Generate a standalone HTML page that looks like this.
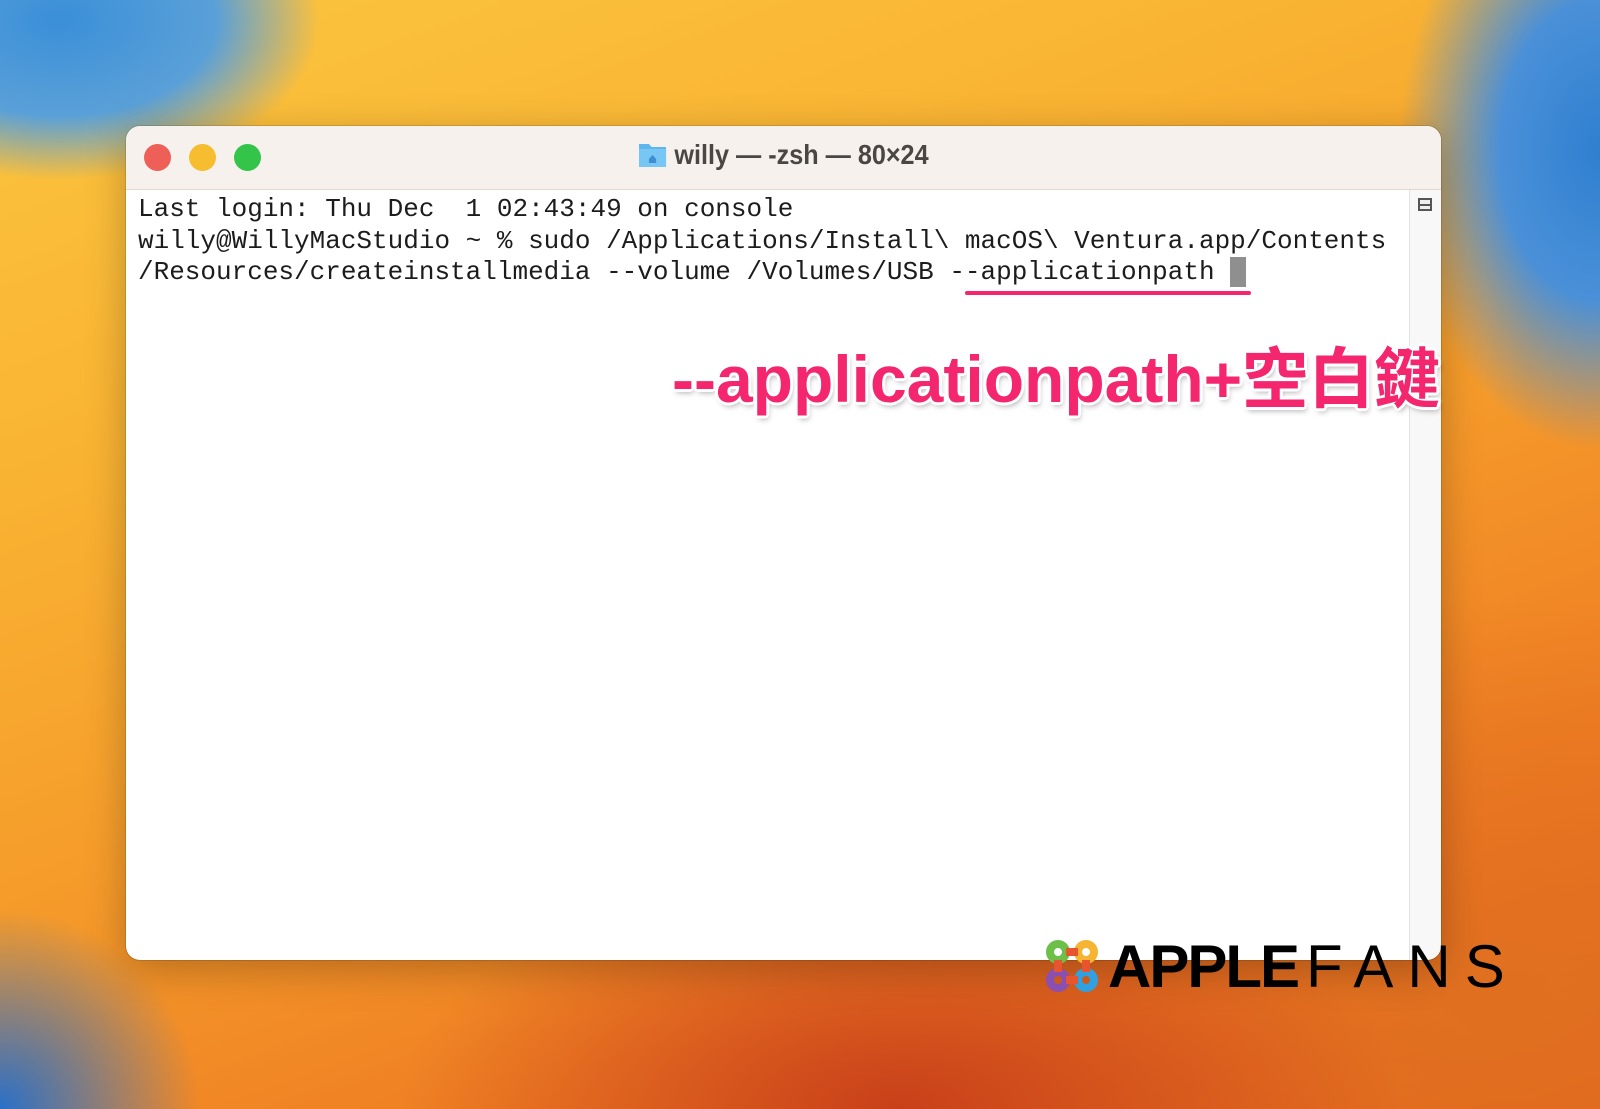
<!DOCTYPE html>
<html><head><meta charset="utf-8"><style>
html,body{margin:0;padding:0}
body{width:1600px;height:1109px;position:relative;overflow:hidden;
background:
radial-gradient(ellipse 260px 160px at 60px 20px,#3a8fd8 0%,#5aa0d8 60%,rgba(90,160,216,0) 100%),
radial-gradient(ellipse 200px 300px at 1600px 150px,#2f7fd0 0%,#4a90d8 50%,rgba(74,144,216,0) 100%),
radial-gradient(ellipse 200px 200px at 0px 1109px,#2a70c8 0%,rgba(42,112,200,0) 100%),
radial-gradient(ellipse 500px 250px at 900px 1109px,#c8401a 0%,rgba(200,64,26,0) 100%),
radial-gradient(ellipse 600px 400px at 1500px 1000px,#e07020 0%,rgba(224,112,32,0) 100%),
linear-gradient(160deg,#fbc640 0%,#f9b232 30%,#f59a2a 55%,#ee7a22 80%,#e2601c 100%);}
.win{position:absolute;left:126px;top:126px;width:1315px;height:834px;border-radius:14px;background:#fff;overflow:hidden;box-shadow:0 10px 40px rgba(0,0,0,.25),0 0 0 1px rgba(0,0,0,.12)}
.tb{height:63px;background:#f6f1ec;border-bottom:1px solid #ddd8d3;position:relative}
.dot{position:absolute;top:18px;width:27px;height:27px;border-radius:50%}
.title{position:absolute;left:0;right:0;top:13px;text-align:center;font:bold 28px "Liberation Sans",sans-serif;color:#4a4644;transform:scaleX(.9)}
.term{position:absolute;left:12px;top:68px;font:26px/31.5px "Liberation Mono",monospace;color:#1c1c1c;white-space:pre}
.sb{position:absolute;right:0;top:64px;width:31px;bottom:0;background:#f8f8f8;border-left:1px solid #e2e2e2}
.ann{position:absolute;left:672px;top:326px;font:bold 66px "Liberation Sans","Noto Sans CJK TC",sans-serif;color:#f4276e;letter-spacing:0px;white-space:nowrap;
text-shadow:3px 0 #fff,-3px 0 #fff,0 3px #fff,0 -3px #fff,2px 2px #fff,-2px 2px #fff,2px -2px #fff,-2px -2px #fff,2px 4px 6px rgba(0,0,0,.3)}
.logo{position:absolute;left:1108px;top:932px;font:900 60px "Liberation Sans",sans-serif;color:#000;white-space:nowrap;letter-spacing:-2px}
.logo span{font-weight:300;letter-spacing:14px;margin-left:8px}
</style></head><body>
<div class="win">
<div class="tb">
<div class="dot" style="left:18px;background:#ed5f57"></div>
<div class="dot" style="left:63px;background:#f5bd2f"></div>
<div class="dot" style="left:108px;background:#34c449"></div>
<div class="title"><svg width="32" height="28" viewBox="0 0 32 28" style="vertical-align:-4px;margin-right:8px"><path d="M1 4h11l3 3h16v20H1z" fill="#5eb6ee"/><path d="M1 9h30v18H1z" fill="#78c6f4"/><path d="M12 19l4-4 4 4v4h-8z" fill="#3f8fd0"/></svg>willy — -zsh — 80×24</div>
</div>
<div class="term">Last login: Thu Dec  1 02:43:49 on console
willy@WillyMacStudio ~ % sudo /Applications/Install\ macOS\ Ventura.app/Contents
/Resources/createinstallmedia --volume /Volumes/USB --applicationpath <span style="background:#8f8f8f;color:#8f8f8f"> </span></div>
<div style="position:absolute;left:839px;top:165px;width:286px;height:4px;border-radius:2px;background:#f4276e"></div>
<div class="sb"><div style="position:absolute;left:8px;top:8px;width:14px;height:13px;border:2px solid #555;box-sizing:border-box;background:linear-gradient(#555,#555) 0 4px/100% 2px no-repeat,#eee"></div></div>
</div>
<div class="ann">--applicationpath+空白鍵</div>
<svg style="position:absolute;left:1046px;top:940px" width="52" height="52" viewBox="0 0 52 52" fill="none" stroke-width="8">
<circle cx="12" cy="12" r="8" stroke="#6cc04a"/><circle cx="40" cy="12" r="8" stroke="#f5b431"/>
<circle cx="12" cy="40" r="8" stroke="#8a4fb0"/><circle cx="40" cy="40" r="8" stroke="#2fa0e0"/>
<path d="M12 20v12M40 20v12M20 12h12M20 40h12" stroke="#e8542e"/></svg>
<div class="logo">APPLE<span>FANS</span></div>
</body></html>
